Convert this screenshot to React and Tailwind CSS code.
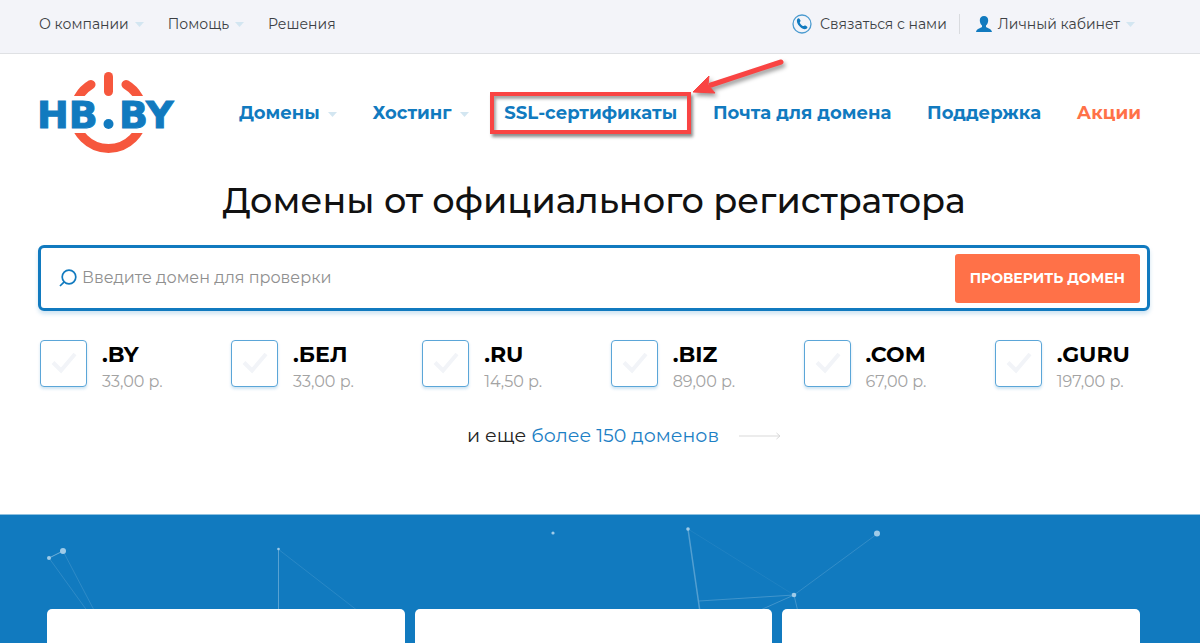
import React, { useState } from "react";

const zones = [
  { name: ".BY", price: "33,00 р." },
  { name: ".БЕЛ", price: "33,00 р." },
  { name: ".RU", price: "14,50 р." },
  { name: ".BIZ", price: "89,00 р." },
  { name: ".COM", price: "67,00 р." },
  { name: ".GURU", price: "197,00 р." },
];

function Caret() {
  return (
    <svg width="9" height="5" viewBox="0 0 9 5" className="mt-[2px] shrink-0 fill-[#d3e6f1]" aria-hidden="true">
      <path d="M0 0h9L4.5 5z" />
    </svg>
  );
}

function Logo() {
  return (
    <svg width="144" height="84" viewBox="-3 0 144 84" role="img" aria-label="HB.BY">
      <defs>
        <clipPath id="logo-top"><rect width="141" height="25" /></clipPath>
        <clipPath id="logo-bottom"><rect y="62" width="141" height="22" /></clipPath>
      </defs>
      <g fill="none" stroke="#f6573d" strokeWidth="9" strokeLinecap="round">
        <path d="M70.500 5.500v15" />
        <g clipPath="url(#logo-top)">
          <path d="M53 13.500A34.500 34.500 0 0 0 36 43" />
          <path d="M88 13.500A34.500 34.500 0 0 1 105 43" />
        </g>
        <path d="M36 43a34.500 34.500 0 0 0 69 0" clipPath="url(#logo-bottom)" />
      </g>
      <g fill="#117abf" stroke="#117abf" strokeWidth="1" fontFamily="'DejaVu Sans', sans-serif" fontWeight="700" fontSize="38">
        <text x="-1" y="57">HB</text>
        <text x="81" y="57">BY</text>
      </g>
      <circle cx="70.500" cy="53" r="5" fill="#117abf" />
    </svg>
  );
}

function TopBar() {
  return (
    <div className="flex h-[54px] items-center justify-between border-b border-[#dfe1e4] bg-[#f3f4f9] pr-[65px] pb-[6px] pl-[39px] text-sm text-[#3c3f44]">
      <div className="flex items-center gap-6">
        <a href="#" className="flex items-center gap-[6px]">О компании <Caret /></a>
        <a href="#" className="flex items-center gap-[6px]">Помощь <Caret /></a>
        <a href="#">Решения</a>
      </div>
      <div className="flex items-center">
        <a href="#" className="flex items-center gap-2 pr-3">
          <svg width="20" height="20" viewBox="0 0 20 20" aria-hidden="true">
            <circle cx="10" cy="10" r="9" fill="none" stroke="#4b9bd0" strokeWidth="1.300" />
            <path d="M5.200 5.300c.8-1.200 1.800-1.200 2.400-.3l.9 1.500c.4.8-.6 1.300-.7 1.900-.1 1 2.600 3.800 3.700 3.700.7 0 1.100-1 1.900-.6l1.500 1c.9.700.600 1.600-.5 2.300-1.600 1-4.300.200-6.600-2.200C5.400 10.200 4.200 7 5.200 5.300z" fill="#117abf" />
          </svg>
          Связаться с нами
        </a>
        <a href="#" className="flex items-center gap-[6px] border-l border-[#d9dbdf] pl-4">
          <svg width="16" height="16" viewBox="0 0 16 16" className="fill-[#117abf]" aria-hidden="true">
            <path d="M8 0c2.600 0 4.200 1.700 4.200 4.200 0 2.200-.8 4.200-2.200 5.400v1.500c.3.800 5.500 1.300 6 4.900H0c.5-3.600 5.700-4.100 6-4.900V9.600C4.600 8.400 3.800 6.400 3.800 4.200 3.800 1.700 5.400 0 8 0z" />
          </svg>
          Личный кабинет <Caret />
        </a>
      </div>
    </div>
  );
}

function Header() {
  return (
    <header className="flex items-center justify-between gap-[60px] pt-[17px] pr-[59px] pl-[35px]">
      <a href="#" className="shrink-0"><Logo /></a>
      <nav className="flex grow items-center justify-between text-lg leading-7 font-bold whitespace-nowrap text-[#117abf]">
        <a href="#" className="flex items-center gap-2">Домены <Caret /></a>
        <a href="#" className="flex items-center gap-2">Хостинг <Caret /></a>
        <a href="#" className="relative">
          SSL-сертификаты
          <span className="absolute -inset-x-[14px] -inset-y-[7px] border-4 border-[#f94443] shadow-[2px_3px_3px_rgba(0,0,0,0.45),inset_2px_3px_3px_rgba(0,0,0,0.35)]" />
          <svg width="100" height="46" viewBox="0 0 100 46" className="absolute -top-[44px] left-full ml-4 drop-shadow-[2px_3px_2px_rgba(0,0,0,0.4)]" aria-hidden="true">
            <path d="M88 7L18 30" stroke="#f94443" strokeWidth="5" strokeLinecap="round" />
            <path d="M0 37L16 21l-1 9 7 8z" fill="#f94443" stroke="#f94443" />
          </svg>
        </a>
        <a href="#">Почта для домена</a>
        <a href="#">Поддержка</a>
        <a href="#" className="text-[#ff7148]">Акции</a>
      </nav>
    </header>
  );
}

function DomainSearch() {
  const [domain, setDomain] = useState("");

  return (
    <form
      onSubmit={(e) => e.preventDefault()}
      className="flex h-[66px] items-center rounded-md border-[3px] border-[#117abf] pr-[7px] pl-[18px] shadow-[0_3px_4px_rgba(17,122,191,0.2)]"
    >
      <svg width="18" height="18" viewBox="0 0 18 18" className="shrink-0" fill="none" stroke="#117abf" strokeWidth="1.700" aria-hidden="true">
        <circle cx="10" cy="8" r="6.800" />
        <path d="M5.200 12.800L1 17" />
      </svg>
      <input
        type="text"
        aria-label="Введите домен для проверки"
        placeholder="Введите домен для проверки"
        value={domain}
        onChange={(e) => setDomain(e.target.value)}
        className="min-w-0 grow px-[5px] text-base outline-none placeholder:text-[#8f8f8f]"
      />
      <button className="h-[49px] shrink-0 rounded-[3px] bg-[#ff7148] px-[15px] text-sm font-bold text-white">
        ПРОВЕРИТЬ ДОМЕН
      </button>
    </form>
  );
}

function Zone({ zone }) {
  return (
    <label className="flex items-start gap-[15px]">
      <span className="relative">
        <input
          type="checkbox"
          className="peer block size-[47px] appearance-none rounded border border-[#5ba6d8] bg-white shadow-[0_2px_3px_rgba(17,122,191,0.2)]"
        />
        <svg width="26" height="22" viewBox="0 0 26 22" className="pointer-events-none absolute top-3 left-[11px] stroke-[#f2f4f8] peer-checked:stroke-[#117abf]" fill="none" strokeWidth="4" aria-hidden="true">
          <path d="M2 10.500l8 8L24 2" />
        </svg>
      </span>
      <span className="flex flex-col">
        <span className="text-[22px] leading-[30px] font-bold text-black">{zone.name}</span>
        <span className="text-base leading-6 text-[#a3a3a3]">{zone.price}</span>
      </span>
    </label>
  );
}

function Features() {
  return (
    <section className="relative overflow-hidden border-t border-[#8fc1e0] bg-[#117abf] pt-[94px] pr-[60px] pl-[47px]">
      <svg width="1200" height="129" viewBox="0 0 1200 129" className="absolute top-0 left-0" aria-hidden="true">
        <g stroke="#fff" strokeWidth="1" fill="none">
          <path d="M49 43l14-7" opacity=".4" />
          <path d="M49 43l39 54M63 36l32 61" opacity=".12" />
          <path d="M278.500 34v64" opacity=".3" />
          <path d="M278 34l80 62" opacity=".1" />
          <path d="M688 14l12 83" opacity=".28" strokeWidth="1.500" />
          <path d="M688 14l106 66" opacity=".06" />
          <path d="M699 86l95-6M794 80l-38 17M794 80l4 17" opacity=".2" />
          <path d="M794 80l83-61" opacity=".14" />
        </g>
        <g fill="#a0cbe8">
          <circle cx="49" cy="43" r="2" />
          <circle cx="63" cy="36" r="3" />
          <circle cx="278.500" cy="34" r="1.300" />
          <circle cx="553" cy="18" r="1.600" />
          <circle cx="688" cy="14" r="1.800" />
          <circle cx="794" cy="80" r="2.300" />
          <circle cx="877" cy="18.500" r="3" />
        </g>
      </svg>
      <div className="relative grid grid-cols-3 gap-[10px]">
        <div className="h-9 rounded-t-[5px] bg-white" />
        <div className="h-9 rounded-t-[5px] bg-white" />
        <div className="h-9 rounded-t-[5px] bg-white" />
      </div>
    </section>
  );
}

export default function App() {
  return (
    <div className="overflow-hidden bg-white font-[Montserrat,Inter,sans-serif]">
      <TopBar />
      <Header />
      <main>
        <div className="pt-[22px] pr-[50px] pb-16 pl-[38px]">
          <h1 className="mb-5 text-center text-[35px] leading-12 font-medium text-[#111]">
            Домены от официального регистратора
          </h1>
          <DomainSearch />
          <div className="mt-[29px] flex justify-between pr-5 pl-[2px]">
            {zones.map((zone) => (
              <Zone key={zone.name} zone={zone} />
            ))}
          </div>
          <div className="mt-7 flex items-center justify-center gap-5 pl-[60px] text-[19px] leading-7 text-[#222]">
            <p>
              и еще <a href="#" className="text-[#1c80c5]">более 150 доменов</a>
            </p>
            <svg width="42" height="8" viewBox="0 0 42 8" fill="none" stroke="#d9d9d9" aria-hidden="true">
              <path d="M0 4h41M37.500 1L41 4l-3.500 3" />
            </svg>
          </div>
        </div>
        <Features />
      </main>
    </div>
  );
}
